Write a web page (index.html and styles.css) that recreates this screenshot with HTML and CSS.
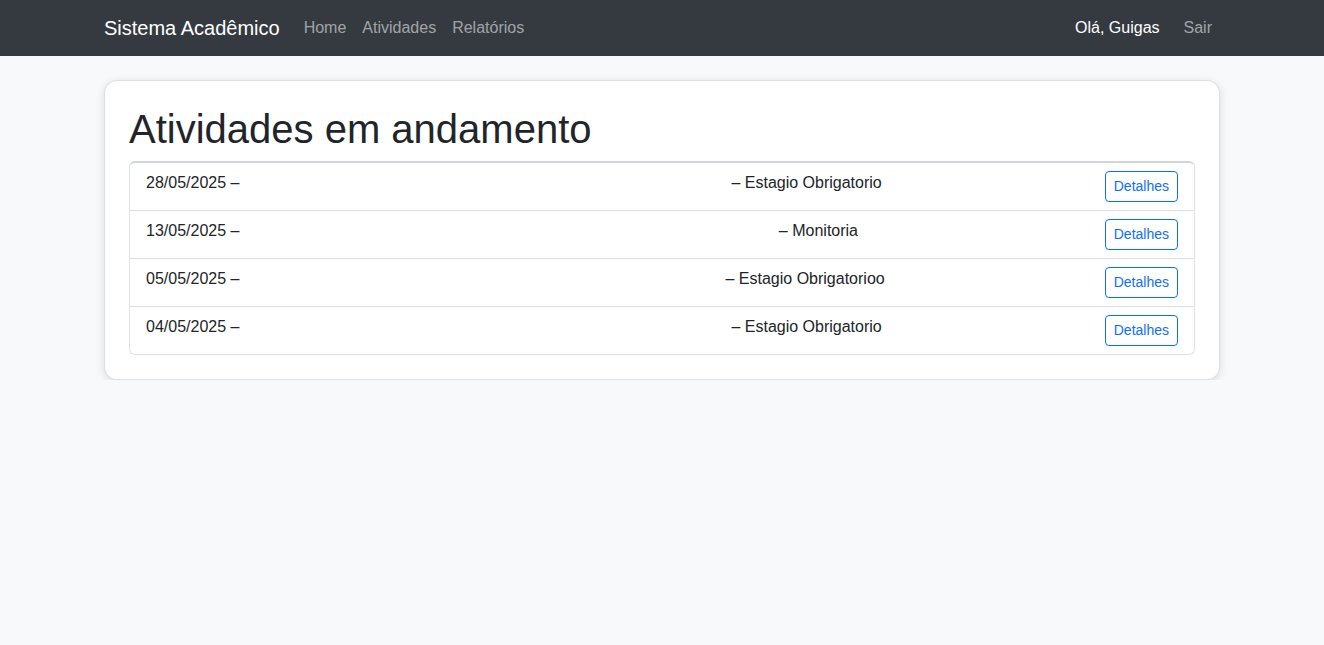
FILE: index.html
```html
<!DOCTYPE html>
<html lang="pt-BR">
<head>
<meta charset="utf-8">
<title>Sistema Acadêmico</title>
<link rel="stylesheet" href="styles.css">
</head>
<body>
<nav class="navbar">
  <div class="container nav-inner">
    <div class="nav-left">
      <a class="brand" href="#">Sistema Acadêmico</a>
      <a class="nav-link" href="#">Home</a>
      <a class="nav-link" href="#">Atividades</a>
      <a class="nav-link" href="#">Relatórios</a>
    </div>
    <div class="nav-right">
      <span class="nav-user">Olá, Guigas</span>
      <a class="nav-link" href="#">Sair</a>
    </div>
  </div>
</nav>
<main class="container">
  <section class="card">
    <h1 class="title">Atividades em andamento</h1>
    <ul class="list">
      <li class="item"><span>28/05/2025 –</span><span class="spacer"></span><span>– Estagio Obrigatorio</span><a class="btn" href="#">Detalhes</a></li>
      <li class="item"><span>13/05/2025 –</span><span class="spacer"></span><span>– Monitoria</span><a class="btn" href="#">Detalhes</a></li>
      <li class="item"><span>05/05/2025 –</span><span class="spacer"></span><span>– Estagio Obrigatorioo</span><a class="btn" href="#">Detalhes</a></li>
      <li class="item"><span>04/05/2025 –</span><span class="spacer"></span><span>– Estagio Obrigatorio</span><a class="btn" href="#">Detalhes</a></li>
    </ul>
  </section>
</main>
</body>
</html>
```
FILE: styles.css
```css
* { box-sizing: border-box; }
html, body { margin: 0; padding: 0; }
body {
  background: #f8f9fa;
  color: #212529;
  font-family: "Liberation Sans", Arial, sans-serif;
  font-size: 16px;
  line-height: 1.5;
}
a { text-decoration: none; }
.container {
  width: 1140px;
  margin: 0 auto;
  padding: 0 12px;
}
.navbar {
  background: #343a40;
  height: 56px;
}
.nav-inner {
  height: 56px;
  display: flex;
  align-items: center;
  justify-content: space-between;
}
.nav-left, .nav-right {
  display: flex;
  align-items: center;
}
.brand {
  color: #fff;
  font-size: 20px;
  line-height: 30px;
  margin-right: 16px;
}
.nav-link {
  color: rgba(255,255,255,.55);
  padding: 8px;
  line-height: 24px;
}
.nav-user {
  color: #fff;
  margin-right: 16px;
}
.card {
  margin-top: 24px;
  background: #fff;
  border: 1px solid rgba(0,0,0,.12);
  border-radius: 13px;
  padding: 24px;
  box-shadow: 0 2px 8px rgba(0,0,0,.12);
}
.title {
  margin: 0 0 8px;
  font-size: 40px;
  line-height: 48px;
  font-weight: 500;
}
.list {
  list-style: none;
  margin: 0;
  padding: 0;
  border: 1px solid #dee2e6;
  border-top: 2px solid #d3d6d9;
  border-radius: 6px;
}
.item {
  display: flex;
  justify-content: space-between;
  align-items: flex-start;
  padding: 8px 16px;
  border-bottom: 1px solid #dee2e6;
}
.item:last-child { border-bottom: 0; }
.spacer { width: 46px; }
.btn {
  display: inline-block;
  color: #0d6efd;
  border: 1px solid #0d6efd;
  border-radius: 4px;
  padding: 4px 8px;
  font-size: 14px;
  line-height: 21px;
}
```
